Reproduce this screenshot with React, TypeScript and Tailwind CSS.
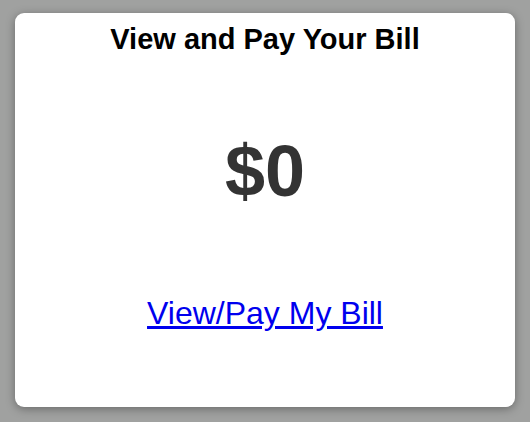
export default function App() {
  return (
    <div className="w-[530px] h-[422px] bg-[#a0a1a0] pt-[13px] pl-[15px] overflow-hidden" style={{ fontFamily: '"Liberation Sans", Arial, sans-serif' }}>
      <div className="w-[500px] h-[394px] bg-white rounded-[9px] shadow-[0_2px_10px_rgba(0,0,0,0.35)] flex flex-col items-center pt-[10px]">
        <h3 className="text-[29px] leading-[32px] font-bold text-black">View and Pay Your Bill</h3>
        <div className="mt-[80px] text-[72px] leading-[72px] font-bold text-[#333333]">$0</div>
        <a href="#" className="mt-[90px] text-[32px] leading-[32px] text-[#0000ee] underline">View/Pay My Bill</a>
      </div>
    </div>
  );
}
